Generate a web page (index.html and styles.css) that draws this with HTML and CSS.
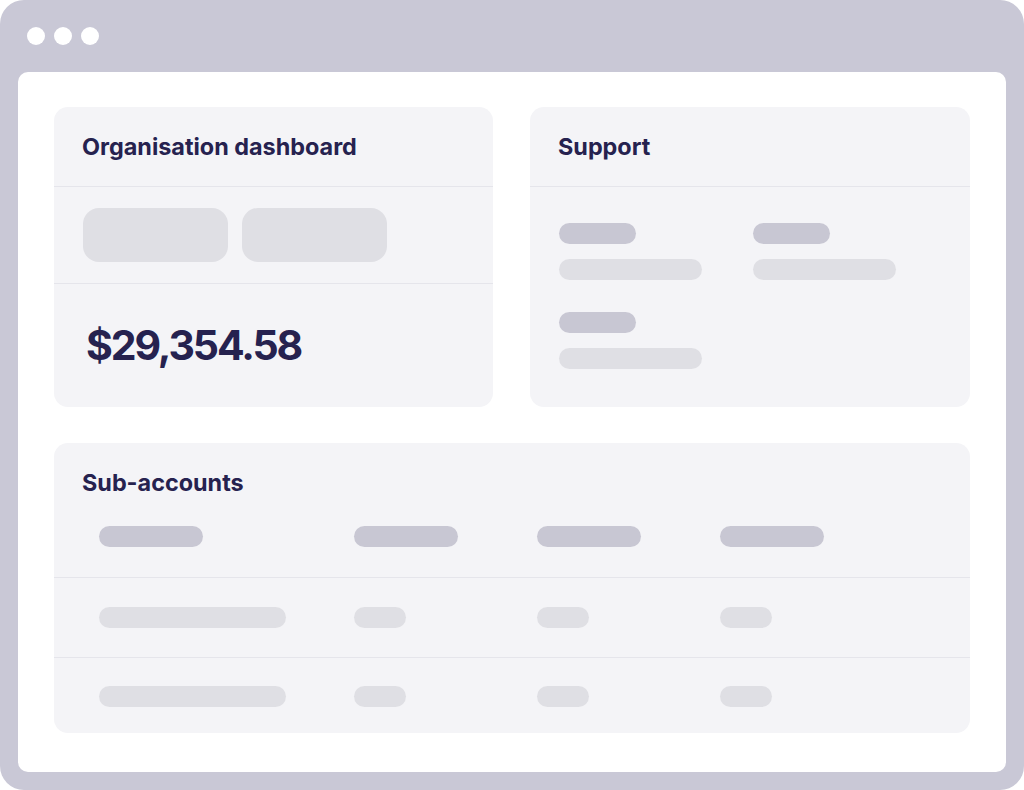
FILE: index.html
```html
<!DOCTYPE html>
<html lang="en">
<head>
    <meta charset="UTF-8">
    <meta name="viewport" content="width=device-width, initial-scale=1.0">
    <title>Organisation dashboard</title>
    <link rel="stylesheet" href="styles.css">
</head>
<body>
    <div class="window">
        <!-- Window chrome -->
        <div class="titlebar">
            <span class="dot"></span>
            <span class="dot"></span>
            <span class="dot"></span>
        </div>

        <div class="screen">
            <!-- Organisation dashboard -->
            <section class="card">
                <h2 class="card-title">Organisation dashboard</h2>
                <div class="tabs">
                    <span class="tab"></span>
                    <span class="tab"></span>
                </div>
                <div class="amount">$29,354.58</div>
            </section>

            <!-- Support -->
            <section class="card">
                <h2 class="card-title">Support</h2>
                <div class="support-grid">
                    <div class="field">
                        <span class="bar bar-dark"></span>
                        <span class="bar bar-light"></span>
                    </div>
                    <div class="field">
                        <span class="bar bar-dark"></span>
                        <span class="bar bar-light"></span>
                    </div>
                    <div class="field">
                        <span class="bar bar-dark"></span>
                        <span class="bar bar-light"></span>
                    </div>
                </div>
            </section>

            <!-- Sub-accounts -->
            <section class="card card-wide">
                <h2 class="table-title">Sub-accounts</h2>
                <div class="table-row table-head">
                    <span class="bar bar-dark bar-col"></span>
                    <span class="bar bar-dark bar-col"></span>
                    <span class="bar bar-dark bar-col"></span>
                    <span class="bar bar-dark bar-col"></span>
                </div>
                <div class="table-row">
                    <span class="bar bar-light bar-name"></span>
                    <span class="bar bar-light bar-short"></span>
                    <span class="bar bar-light bar-short"></span>
                    <span class="bar bar-light bar-short"></span>
                </div>
                <div class="table-row table-last">
                    <span class="bar bar-light bar-name"></span>
                    <span class="bar bar-light bar-short"></span>
                    <span class="bar bar-light bar-short"></span>
                    <span class="bar bar-light bar-short"></span>
                </div>
            </section>
        </div>
    </div>
</body>
</html>
```

FILE: styles.css
```css
body {
    margin: 0;
    background: #fff;
    font-family: Inter, "Noto Sans", sans-serif;
    color: #26224f;
}
.window {
    width: 1024px;
    height: 790px;
    box-sizing: border-box;
    padding: 0 18px 18px;
    background: #c9c8d6;
    border-radius: 24px;
    display: flex;
    flex-direction: column;
}
.titlebar {
    height: 72px;
    box-sizing: border-box;
    display: flex;
    align-items: flex-start;
    gap: 9px;
    padding: 27px 0 0 9px;
}
.dot {
    width: 18px;
    height: 18px;
    border-radius: 50%;
    background: #fff;
}
.screen {
    flex: 1;
    background: #fff;
    border-radius: 10px;
    padding: 35px 36px 39px;
    display: grid;
    grid-template-columns: 439px 440px;
    grid-template-rows: 300px 290px;
    column-gap: 37px;
    row-gap: 36px;
}
.card {
    background: #f4f4f7;
    border-radius: 14px;
    overflow: hidden;
    display: flex;
    flex-direction: column;
}
.card-wide {
    grid-column: 1 / 3;
}
.card-title {
    margin: 0;
    height: 79px;
    display: flex;
    align-items: center;
    padding: 0 29px 0 28px;
    font-size: 23.4px;
    font-weight: 700;
    border-bottom: 1px solid #e5e5eb;
}
.tabs {
    display: flex;
    gap: 14px;
    padding: 21px 29px;
    border-bottom: 1px solid #e5e5eb;
}
.tab {
    width: 145px;
    height: 54px;
    border-radius: 16px;
    background: #dfdfe4;
}
.amount {
    flex: 1;
    display: flex;
    align-items: center;
    padding: 0 32px 2px;
    font-size: 41px;
    font-weight: 700;
    letter-spacing: -2.1px;
}
.support-grid {
    display: grid;
    grid-template-columns: 194px 194px;
    row-gap: 32px;
    padding: 36px 29px 0;
}
.field {
    display: flex;
    flex-direction: column;
    gap: 15px;
}
.bar {
    display: block;
    height: 21px;
    border-radius: 11px;
}
.bar-dark {
    background: #c8c7d3;
    width: 77px;
}
.bar-light {
    background: #dfdfe4;
    width: 143px;
}
.table-title {
    margin: 0;
    padding: 28px 29px 0 28px;
    line-height: 24px;
    font-size: 23.4px;
    font-weight: 700;
}
.table-row {
    display: grid;
    grid-template-columns: 255px 183px 183px 1fr;
    padding: 29px 45px;
    border-bottom: 1px solid #e5e5eb;
}
.table-head {
    padding: 31px 45px 30px;
}
.table-last {
    border-bottom: none;
    padding-top: 28px;
}
.bar-col {
    width: 104px;
}
.bar-name {
    width: 187px;
}
.bar-short {
    width: 52px;
}
```
